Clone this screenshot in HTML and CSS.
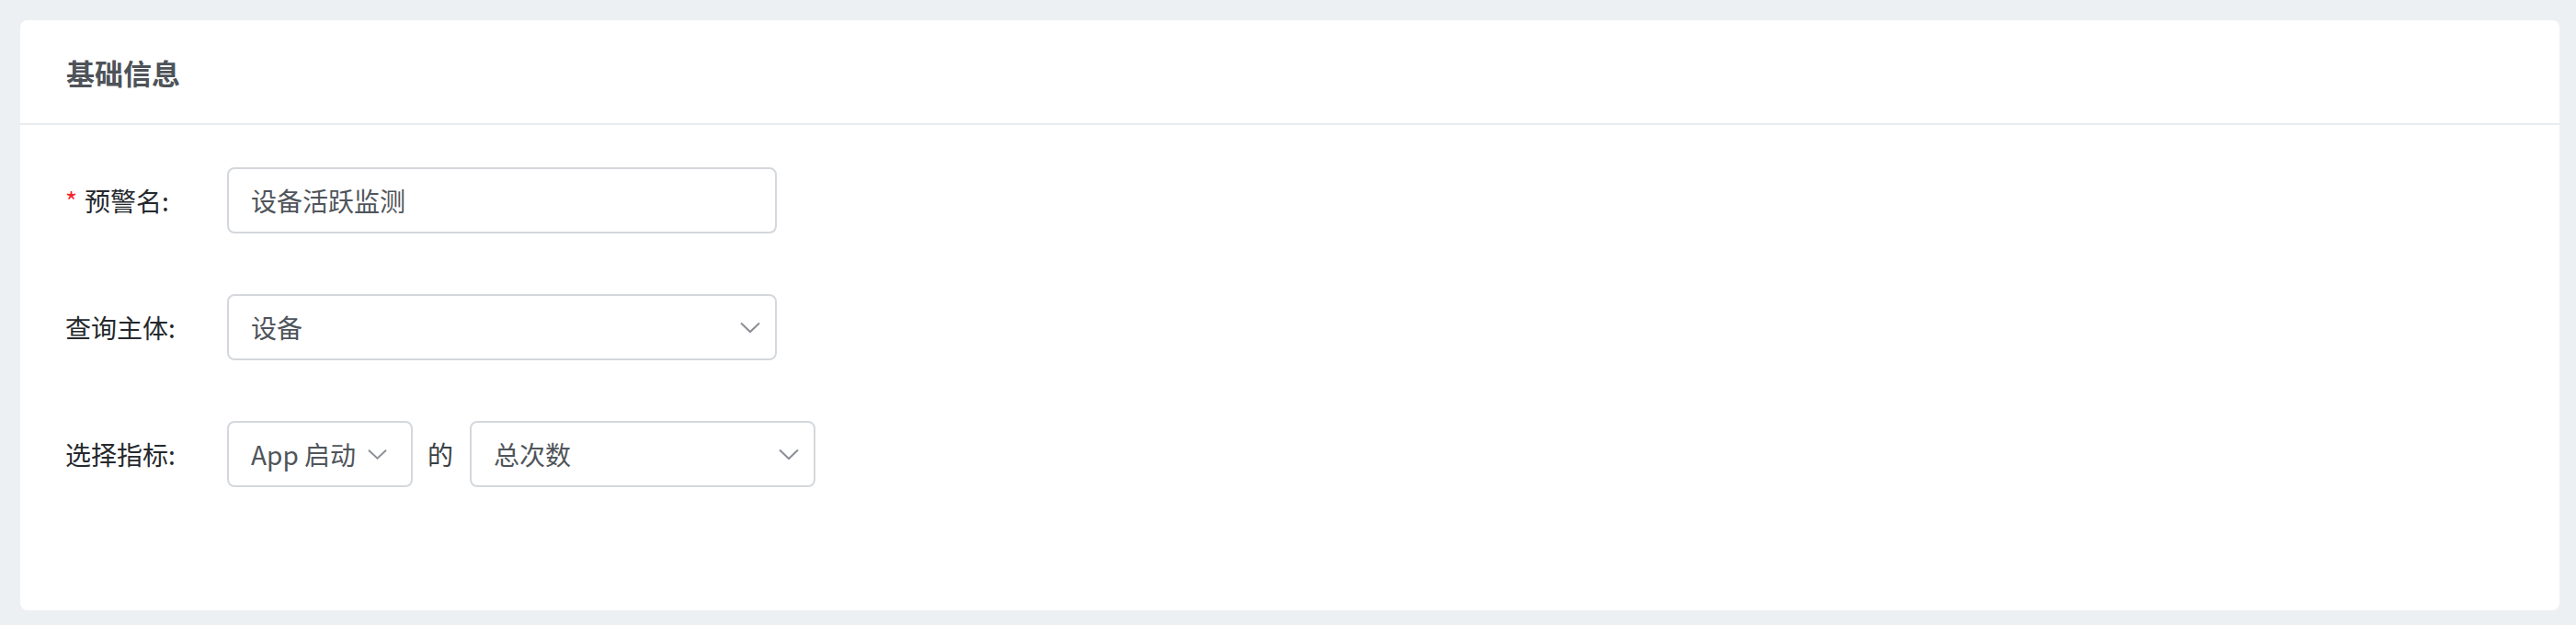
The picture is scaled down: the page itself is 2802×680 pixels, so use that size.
FILE: index.html
```html
<!DOCTYPE html>
<html lang="zh-CN">
<head>
<meta charset="utf-8">
<title>基础信息</title>
<link rel="stylesheet" href="styles.css">
</head>
<body>
<section class="card">
  <header class="card-header">基础信息</header>
  <div class="form">
    <div class="row">
      <label class="label"><span class="req">*</span>预警名:</label>
      <div class="control input">设备活跃监测</div>
    </div>
    <div class="row">
      <label class="label">查询主体:</label>
      <div class="control select wide">
        <span>设备</span>
        <svg class="chev" width="22" height="13" viewBox="0 0 22 13"><path d="M1 1.5 L11 11 L21 1.5" fill="none" stroke="#8b8f95" stroke-width="2"/></svg>
      </div>
    </div>
    <div class="row">
      <label class="label">选择指标:</label>
      <div class="control select small">
        <span>App 启动</span>
        <svg class="chev-inline" width="22" height="13" viewBox="0 0 22 13"><path d="M1 1.5 L11 11 L21 1.5" fill="none" stroke="#8b8f95" stroke-width="2"/></svg>
      </div>
      <span class="of">的</span>
      <div class="control select metric">
        <span>总次数</span>
        <svg class="chev" width="22" height="13" viewBox="0 0 22 13"><path d="M1 1.5 L11 11 L21 1.5" fill="none" stroke="#8b8f95" stroke-width="2"/></svg>
      </div>
    </div>
  </div>
</section>
</body>
</html>
```
FILE: styles.css
```css
html, body {
  margin: 0;
}
body {
  background: #edf0f3;
  padding: 22px 18px 0 22px;
  font-family: "Noto Sans CJK SC", "Noto Sans", sans-serif;
}
.card {
  background: #ffffff;
  border-radius: 8px;
  height: 642px;
}
.card-header {
  height: 114px;
  box-sizing: border-box;
  display: flex;
  align-items: center;
  padding-left: 50px;
  border-bottom: 2px solid #e8ecee;
  font-size: 31px;
  font-weight: 700;
  color: #4e5359;
}
.form {
  padding: 46px 50px 0 49px;
}
.row {
  display: flex;
  align-items: center;
  height: 72px;
  margin-bottom: 66px;
}
.label {
  width: 176px;
  flex: none;
  font-size: 28px;
  color: #25292d;
  white-space: nowrap;
}
.req {
  color: #f5222d;
  margin-right: 8px;
}
.control {
  height: 72px;
  box-sizing: border-box;
  border: 2px solid #d4d8dc;
  border-radius: 8px;
  display: flex;
  align-items: center;
  padding: 0 16px 0 24px;
  font-size: 28px;
  color: #4f555b;
  white-space: nowrap;
}
.input, .wide {
  width: 598px;
}
.small {
  width: 202px;
  padding-right: 26px;
}
.metric {
  width: 376px;
}
.chev {
  margin-left: auto;
}
.chev-inline {
  margin-left: 13px;
}
.of {
  font-size: 28px;
  color: #3a3f44;
  margin: 0 18px 0 16px;
}
```
